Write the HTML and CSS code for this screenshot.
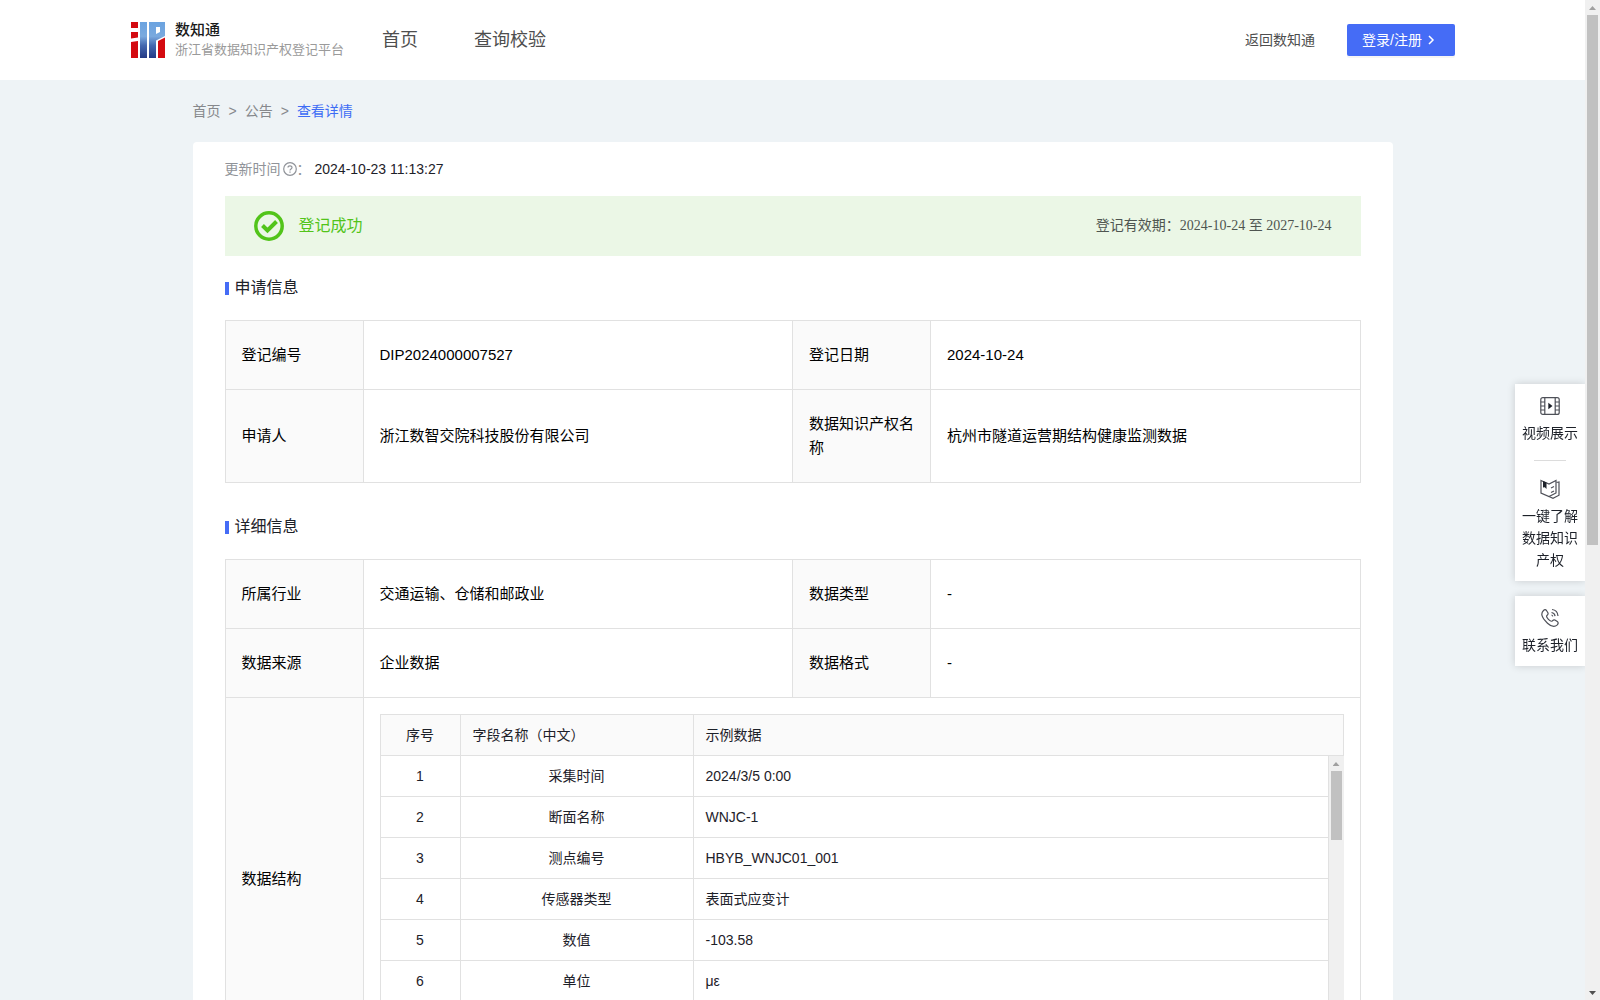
FILE: index.html
```html
<!DOCTYPE html>
<html lang="zh-CN">
<head>
    <meta charset="UTF-8">
    <meta name="viewport" content="width=device-width, initial-scale=1.0">
    <title>数知通</title>
    <link rel="stylesheet" href="styles.css">
</head>
<body>
    <header class="header">
        <a class="logo" href="#">
            <svg class="logo-icon" width="34" height="36" viewBox="0 0 34 36">
                <defs>
                    <linearGradient id="blue" x1="0" y1="0" x2="0" y2="1">
                        <stop offset="0" stop-color="#6ba3e0"/>
                        <stop offset="0.4" stop-color="#7aa9de"/>
                        <stop offset="0.65" stop-color="#4468b0"/>
                        <stop offset="1" stop-color="#243a85"/>
                    </linearGradient>
                </defs>
                <path fill="#d40a10" d="M0 0h7v6H0zM0 10h7v5.500L0 16.500zM0 20l7-1v17H0zM27 19l7-3.500V36h-7z"/>
                <path fill="url(#blue)" d="M9 0h7v36H9zM18 0h16v14l-9 4.500V36h-7zM25 5v7l4-2V5z"/>
            </svg>
            <span class="logo-text">
                <strong class="logo-name">数知通</strong>
                <span class="logo-sub">浙江省数据知识产权登记平台</span>
            </span>
        </a>
        <nav class="nav">
            <a href="#">首页</a>
            <a href="#">查询校验</a>
        </nav>
        <a class="back" href="#">返回数知通</a>
        <button class="login" type="button">登录/注册
            <svg width="12" height="12" viewBox="0 0 12 12"><path d="M4 2l4 4-4 4" fill="none" stroke="#fff" stroke-width="1.500"/></svg>
        </button>
    </header>

    <main class="container">
        <nav class="breadcrumb">
            <a href="#">首页</a>
            <span>&gt;</span>
            <a href="#">公告</a>
            <span>&gt;</span>
            <a class="current" href="#">查看详情</a>
        </nav>

        <div class="card">
            <div class="update">
                <span class="update-label">更新时间</span>
                <svg width="14" height="14" viewBox="0 0 14 14" fill="none" stroke="#909399">
                    <circle cx="7" cy="7" r="6.300" stroke-width="1.200"/>
                    <path d="M5 5.600C5 3.200 9 3.200 9 5.500 9 7 7 6.900 7 8.500M7 9.600v1.200" stroke-width="1.200"/>
                </svg>
                <span class="update-label colon">：</span>
                <span>2024-10-23 11:13:27</span>
            </div>

            <div class="status">
                <svg width="30" height="30" viewBox="0 0 30 30" fill="none" stroke="#52c41a">
                    <circle cx="15" cy="15" r="13.200" stroke-width="3.500"/>
                    <path d="M8.500 14.500l5 5 9-9" stroke-width="4"/>
                </svg>
                <span class="status-text">登记成功</span>
                <span class="status-date">登记有效期：2024-10-24 至 2027-10-24</span>
            </div>

            <h2 class="title">申请信息</h2>
            <table class="info">
                <colgroup><col class="col-label"><col><col class="col-label"><col></colgroup>
                <tbody>
                    <tr>
                        <th scope="row">登记编号</th>
                        <td>DIP2024000007527</td>
                        <th scope="row">登记日期</th>
                        <td>2024-10-24</td>
                    </tr>
                    <tr>
                        <th scope="row">申请人</th>
                        <td>浙江数智交院科技股份有限公司</td>
                        <th scope="row">数据知识产权名称</th>
                        <td>杭州市隧道运营期结构健康监测数据</td>
                    </tr>
                </tbody>
            </table>

            <h2 class="title">详细信息</h2>
            <table class="info">
                <colgroup><col class="col-label"><col><col class="col-label"><col></colgroup>
                <tbody>
                    <tr>
                        <th scope="row">所属行业</th>
                        <td>交通运输、仓储和邮政业</td>
                        <th scope="row">数据类型</th>
                        <td>-</td>
                    </tr>
                    <tr>
                        <th scope="row">数据来源</th>
                        <td>企业数据</td>
                        <th scope="row">数据格式</th>
                        <td>-</td>
                    </tr>
                    <tr>
                        <th scope="row">数据结构</th>
                        <td class="nested" colspan="3">
                            <table class="fields">
                                <colgroup><col class="col-index"><col class="col-name"><col></colgroup>
                                <thead>
                                    <tr><th>序号</th><th>字段名称（中文）</th><th>示例数据</th></tr>
                                </thead>
                            </table>
                            <div class="fields-body">
                                <table class="fields">
                                    <colgroup><col class="col-index"><col class="col-name"><col></colgroup>
                                    <tbody>
                                        <tr><td>1</td><td>采集时间</td><td>2024/3/5 0:00</td></tr>
                                        <tr><td>2</td><td>断面名称</td><td>WNJC-1</td></tr>
                                        <tr><td>3</td><td>测点编号</td><td>HBYB_WNJC01_001</td></tr>
                                        <tr><td>4</td><td>传感器类型</td><td>表面式应变计</td></tr>
                                        <tr><td>5</td><td>数值</td><td>-103.58</td></tr>
                                        <tr><td>6</td><td>单位</td><td>με</td></tr>
                                    </tbody>
                                </table>
                                <div class="scrollbar">
                                    <i class="arrow-up"></i>
                                    <div class="thumb thumb-fields"></div>
                                    <i class="arrow-down"></i>
                                </div>
                            </div>
                        </td>
                    </tr>
                </tbody>
            </table>
        </div>
    </main>

    <aside class="side">
        <div class="side-card">
            <a class="side-item" href="#">
                <svg width="20" height="20" viewBox="0 0 20 20" fill="none" stroke="#4e5058" stroke-width="1.200">
                    <rect x="0.800" y="1.600" width="18.400" height="16.800" rx="2"/>
                    <path d="M4.800 1.600v16.800M15.200 1.600v16.800M0.800 6h4M0.800 10h4M0.800 14h4M15.200 6h4M15.200 10h4M15.200 14h4"/>
                    <path d="M8.300 6.800v6.400l4.200-3.200z" fill="#1d2129" stroke="none"/>
                </svg>
                视频展示
            </a>
            <hr class="side-line">
            <a class="side-item" href="#">
                <svg width="20" height="20" viewBox="0 0 20 20" fill="none" stroke="#4e5058" stroke-width="1.200">
                    <path d="M1 1.500l8 3.500 7-3.500v12.500L9 17.500l-8-3.500z"/>
                    <path d="M16.500 3.500l2.500-.6v13.300L13 19.300 9 17.500M11 9l3-1.500M11 13.500l3-1.500"/>
                    <path d="M3 2l3.500 1.500v6.500L4.800 8.200 3 8.500z" fill="#1d2129" stroke="none"/>
                </svg>
                一键了解数据知识产权
            </a>
        </div>
        <div class="side-card">
            <a class="side-item" href="#">
                <svg width="20" height="20" viewBox="0 0 20 20" fill="none" stroke="#4e5058" stroke-width="1.200">
                    <path d="M3.500 2.500C4.700 1.300 5.600 1.500 6.500 2.500L8 5c.5 1.200-.3 1.800-1.200 2.600-.7.900.3 2.400 1.600 3.700s2.900 2.400 3.800 1.700c.9-.9 1.500-1.600 2.700-1l2.400 1.600c1.300 1 1 2.100 0 3.200-2 2-5.400 2.500-9.800-1.600C.8 8.700.8 5.200 3.500 2.500z"/>
                    <path d="M11.500 4.500c2 .3 3.300 1.600 3.600 3.600M12 1.500c3.500.4 5.700 2.700 6 6.500M11.500 7c.7.200 1.100.7 1.300 1.400"/>
                </svg>
                联系我们
            </a>
        </div>
    </aside>

    <div class="scrollbar scrollbar-page">
        <i class="arrow-up"></i>
        <div class="thumb thumb-page"></div>
        <i class="arrow-down"></i>
    </div>
</body>
</html>
```
FILE: styles.css
```css
* {
    box-sizing: border-box;
}
body {
    margin: 0;
    padding-right: 15px;
    height: 100vh;
    overflow: hidden;
    background-color: #eef3f6;
    color: #1d2129;
    font-family: "Liberation Sans", "Noto Sans CJK SC", sans-serif;
    font-size: 14px;
    line-height: 22px;
}
a {
    color: inherit;
    text-decoration: none;
}
svg {
    flex: none;
}

/* header */
.header {
    display: flex;
    align-items: center;
    height: 80px;
    padding: 0 130px 0 131px;
    background-color: #fff;
    color: #4e4e4e;
}
.logo {
    display: flex;
    align-items: center;
    gap: 10px;
}
.logo-text {
    display: flex;
    flex-direction: column;
}
.logo-name {
    color: #1a1a1a;
    font-size: 15px;
    font-weight: 500;
    line-height: 20px;
}
.logo-sub {
    color: #9a9a9a;
    font-size: 13px;
    line-height: 20px;
}
.nav {
    display: flex;
    flex: 1;
    gap: 56px;
    margin-left: 38px;
    font-size: 18px;
}
.back {
    margin-right: 32px;
}
.login {
    display: flex;
    align-items: center;
    gap: 3px;
    width: 108px;
    height: 32px;
    padding: 0 15px;
    border: none;
    border-radius: 2px;
    background-color: #456cf6;
    box-shadow: 0 2px 0 rgba(0, 0, 0, 0.04);
    color: #fff;
    font: inherit;
    white-space: nowrap;
    cursor: pointer;
}

/* content */
.container {
    max-width: 1200px;
    margin: 0 auto;
}
.breadcrumb {
    display: flex;
    gap: 8px;
    padding: 20px 0;
    color: #86888c;
}
.breadcrumb .current {
    color: #3d6cf5;
}
.card {
    padding: 16px 32px;
    border-radius: 4px;
    background-color: #fff;
}
.update {
    display: flex;
    align-items: center;
}
.update svg {
    margin-left: 2px;
}
.update-label {
    color: #909399;
}
.colon {
    margin-right: 4px;
}
.status {
    display: flex;
    align-items: center;
    height: 60px;
    margin: 16px 0 20px;
    padding: 0 29px;
    background-color: #ebf7e6;
}
.status-text {
    flex: 1;
    margin-left: 15px;
    color: #52c41a;
    font-size: 16px;
}
.status-date {
    color: #4e5550;
    font-family: "Liberation Serif", "Noto Sans CJK SC", serif;
}
.title {
    display: flex;
    align-items: center;
    gap: 6px;
    margin: 0 0 20px;
    font-size: 16px;
    font-weight: 400;
    line-height: 24px;
}
.title::before {
    content: "";
    width: 4px;
    height: 13px;
    background-color: #456cf6;
}

/* info tables */
table {
    width: 100%;
    border-collapse: collapse;
    table-layout: fixed;
}
th,
td {
    border: 1px solid #e1e1e1;
    font-weight: 400;
    text-align: left;
}
th {
    background-color: #fafafa;
}
.info {
    margin-bottom: 32px;
    color: #000;
    font-size: 15px;
    line-height: 24px;
}
.info th,
.info td {
    padding: 22px 15px 22px 16px;
}
.col-label {
    width: 138px;
}
.info .nested {
    padding: 16px;
}

/* field list inside 数据结构 */
.fields {
    color: #1d2129;
    font-size: 14px;
    line-height: 22px;
}
.fields .col-index {
    width: 80px;
}
.fields .col-name {
    width: 233px;
}
.info .fields th,
.info .fields td {
    padding: 9px 12px;
}
.fields th:first-child,
.fields td:first-child,
.fields td:nth-child(2) {
    text-align: center;
}
.fields-body {
    display: flex;
    align-items: flex-start;
    height: 287px;
    overflow: hidden;
}
.fields-body .fields {
    flex: 1;
}
.fields-body tr:first-child td {
    border-top: none;
}

/* scrollbars */
.scrollbar {
    display: flex;
    flex-direction: column;
    align-items: center;
    width: 15px;
    height: 100%;
    background-color: #f0f0f0;
}
.scrollbar-page {
    position: fixed;
    top: 0;
    right: 0;
}
.thumb {
    width: 11px;
    margin-bottom: auto;
    background-color: #c1c1c1;
}
.thumb-fields {
    height: 69px;
}
.thumb-page {
    height: 53%;
}
.arrow-up,
.arrow-down {
    width: 7px;
    height: 4px;
    background-color: #a0a0a0;
    clip-path: polygon(50% 0, 100% 100%, 0 100%);
    margin: 6px 0 5px;
}
.arrow-down {
    background-color: #505050;
    clip-path: polygon(0 0, 100% 0, 50% 100%);
}

/* floating side menu */
.side {
    position: fixed;
    top: 384px;
    right: 15px;
    width: 70px;
}
.side-card {
    margin-bottom: 15px;
    background-color: #fff;
    box-shadow: 0 0 8px rgba(0, 0, 0, 0.16);
}
.side-item {
    display: flex;
    flex-direction: column;
    align-items: center;
    gap: 6px;
    padding: 12px 7px 10px;
    text-align: center;
}
.side-line {
    width: 32px;
    margin: 6px auto;
    border: none;
    border-top: 1px solid #dcdcdc;
}
```
